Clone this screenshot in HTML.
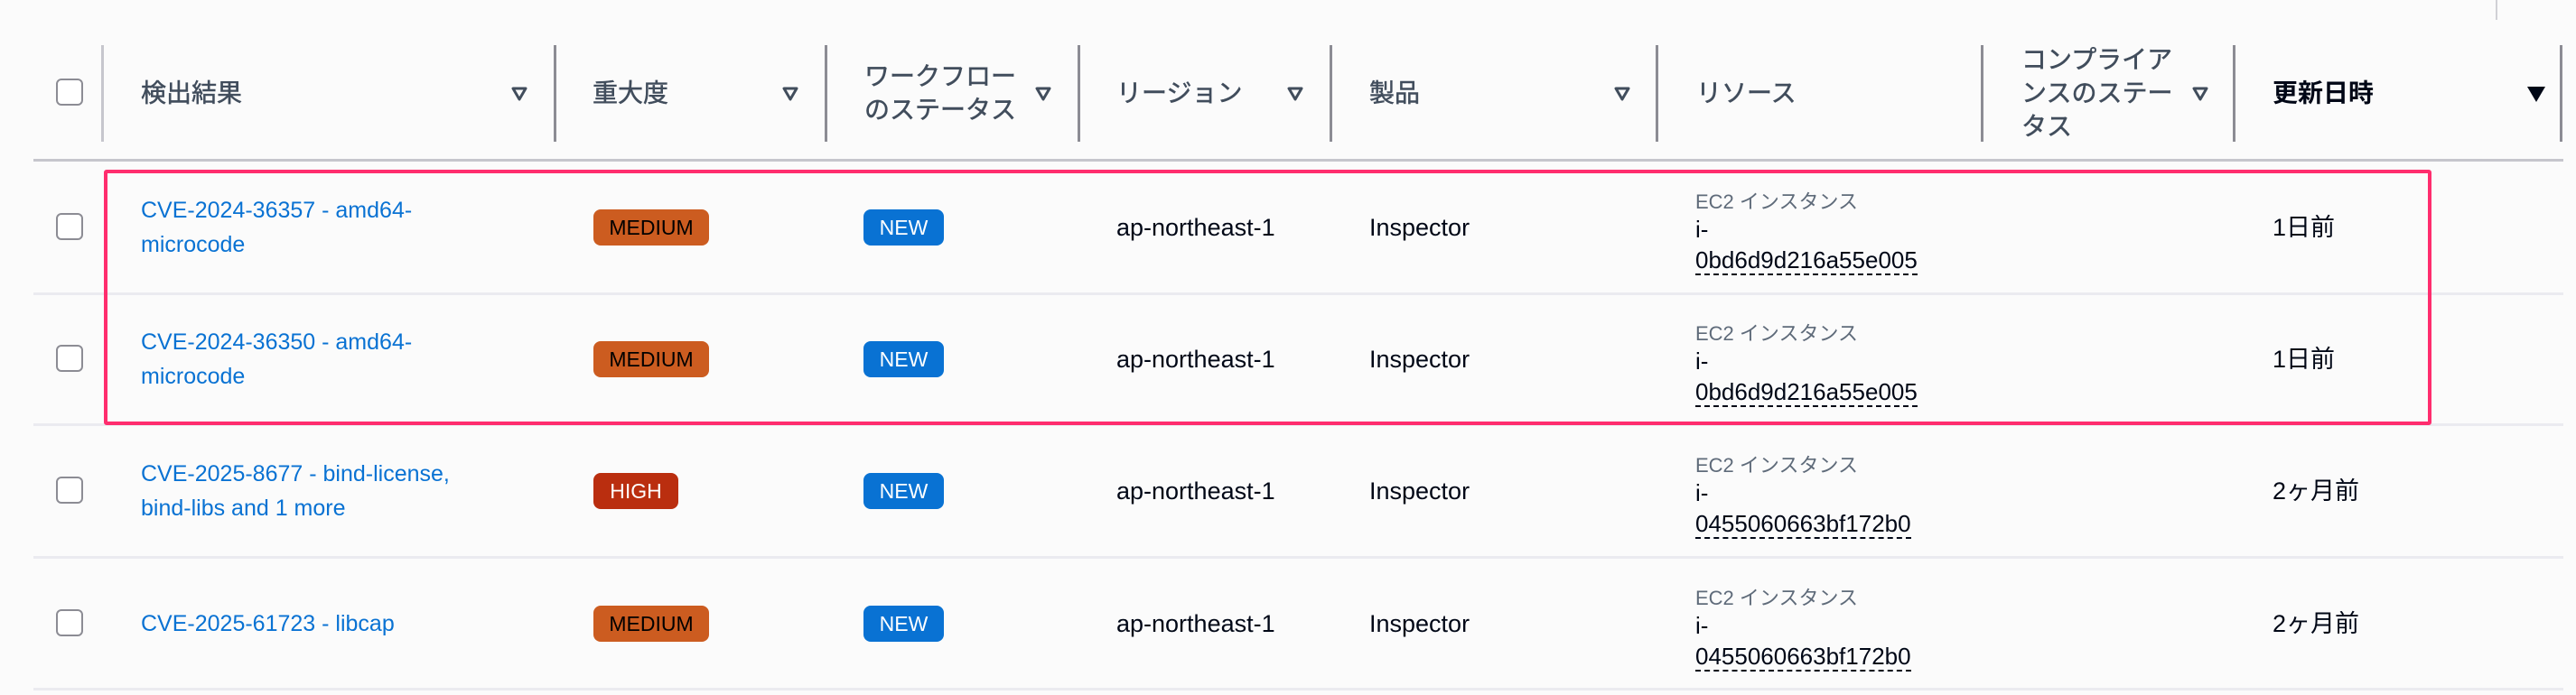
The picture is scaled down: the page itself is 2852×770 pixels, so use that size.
<!DOCTYPE html>
<html><head><meta charset="utf-8"><style>
body{margin:0;width:2852px;height:770px;background:#fbfbfb;position:relative;overflow:hidden;font-family:"Liberation Sans","Noto Sans CJK JP",sans-serif;}
.a{position:absolute;white-space:nowrap;}
.div{position:absolute;top:50px;height:107px;width:3px;background:#8c8c94;}
.h{position:absolute;color:#414d5c;font-size:28px;font-weight:normal;line-height:37px;transform:translateY(-50%);-webkit-text-stroke:0.5px #414d5c;}
.cb{position:absolute;left:62px;width:26px;height:26px;border:2px solid #8c8c94;border-radius:6px;background:#fff;}
.sort{position:absolute;width:18px;height:16px;}
.line{position:absolute;left:37px;right:14px;height:3px;background:#ebebf0;}
.lnk{position:absolute;left:156px;color:#0972d3;font-size:25px;line-height:38px;}
.bd{position:absolute;height:40px;line-height:40px;border-radius:8px;font-size:23px;text-align:center;}
.med{background:#cc5c20;color:#000;width:128px;left:657px;}
.high{background:#ba2e0f;color:#fff;width:94px;left:657px;}
.new{background:#0972d3;color:#fff;width:89px;left:956px;}
.t{position:absolute;color:#000716;font-size:27px;line-height:30px;}
.ec{position:absolute;left:1877px;color:#5f6b7a;font-size:22px;}
.id{position:absolute;left:1877px;color:#000716;font-size:26px;line-height:34px;}
.id span{border-bottom:2px dashed #000716;}
</style></head><body>
<div class="a" style="left:2763px;top:0;width:2px;height:22px;background:#d1d1d6"></div>
<div class="cb" style="top:87px"></div>
<div class="div" style="left:112px;background:#c6c6cd"></div>
<div class="div" style="left:613px"></div>
<div class="div" style="left:913px"></div>
<div class="div" style="left:1193px"></div>
<div class="div" style="left:1472px"></div>
<div class="div" style="left:1833px"></div>
<div class="div" style="left:2193px"></div>
<div class="div" style="left:2472px"></div>
<div class="div" style="left:2834px"></div>
<div class="h" style="left:156px;top:103px">検出結果</div>
<div class="h" style="left:656px;top:103px">重大度</div>
<div class="h" style="left:957px;top:103px">ワークフロー<br>のステータス</div>
<div class="h" style="left:1236px;top:103px">リージョン</div>
<div class="h" style="left:1516px;top:103px">製品</div>
<div class="h" style="left:1878px;top:103px">リソース</div>
<div class="h" style="left:2238px;top:103px">コンプライア<br>ンスのステー<br>タス</div>
<div class="h" style="left:2516px;top:103px;color:#000716;font-weight:bold;-webkit-text-stroke:0">更新日時</div>
<svg class="sort" style="left:566px;top:96px" viewBox="0 0 18 16"><path d="M2 2H16L9 14Z" fill="none" stroke="#414d5c" stroke-width="3" stroke-linejoin="round"/></svg>
<svg class="sort" style="left:866px;top:96px" viewBox="0 0 18 16"><path d="M2 2H16L9 14Z" fill="none" stroke="#414d5c" stroke-width="3" stroke-linejoin="round"/></svg>
<svg class="sort" style="left:1146px;top:96px" viewBox="0 0 18 16"><path d="M2 2H16L9 14Z" fill="none" stroke="#414d5c" stroke-width="3" stroke-linejoin="round"/></svg>
<svg class="sort" style="left:1425px;top:96px" viewBox="0 0 18 16"><path d="M2 2H16L9 14Z" fill="none" stroke="#414d5c" stroke-width="3" stroke-linejoin="round"/></svg>
<svg class="sort" style="left:1787px;top:96px" viewBox="0 0 18 16"><path d="M2 2H16L9 14Z" fill="none" stroke="#414d5c" stroke-width="3" stroke-linejoin="round"/></svg>
<svg class="sort" style="left:2427px;top:96px" viewBox="0 0 18 16"><path d="M2 2H16L9 14Z" fill="none" stroke="#414d5c" stroke-width="3" stroke-linejoin="round"/></svg>
<svg class="sort" style="left:2797px;top:94px;width:22px;height:20px" viewBox="0 0 22 20"><path d="M1 2H21L11 19Z" fill="#000716"/></svg>
<div class="line" style="top:176px;background:#c6c6cd"></div>
<div class="line" style="top:324px"></div>
<div class="line" style="top:469px"></div>
<div class="line" style="top:616px"></div>
<div class="line" style="top:762px"></div>

<div class="cb" style="top:236px"></div>
<div class="lnk" style="top:214px">CVE-2024-36357 - amd64-<br>microcode</div>
<div class="bd med" style="top:232px">MEDIUM</div>
<div class="bd new" style="top:232px">NEW</div>
<div class="t" style="left:1236px;top:237px">ap-northeast-1</div>
<div class="t" style="left:1516px;top:237px">Inspector</div>
<div class="ec" style="top:206px">EC2 インスタンス</div>
<div class="id" style="top:237px">i-<br><span>0bd6d9d216a55e005</span></div>
<div class="t" style="left:2516px;top:237px">1日前</div>

<div class="cb" style="top:382px"></div>
<div class="lnk" style="top:360px">CVE-2024-36350 - amd64-<br>microcode</div>
<div class="bd med" style="top:378px">MEDIUM</div>
<div class="bd new" style="top:378px">NEW</div>
<div class="t" style="left:1236px;top:383px">ap-northeast-1</div>
<div class="t" style="left:1516px;top:383px">Inspector</div>
<div class="ec" style="top:352px">EC2 インスタンス</div>
<div class="id" style="top:383px">i-<br><span>0bd6d9d216a55e005</span></div>
<div class="t" style="left:2516px;top:383px">1日前</div>

<div class="cb" style="top:528px"></div>
<div class="lnk" style="top:506px">CVE-2025-8677 - bind-license,<br>bind-libs and 1 more</div>
<div class="bd high" style="top:524px">HIGH</div>
<div class="bd new" style="top:524px">NEW</div>
<div class="t" style="left:1236px;top:529px">ap-northeast-1</div>
<div class="t" style="left:1516px;top:529px">Inspector</div>
<div class="ec" style="top:498px">EC2 インスタンス</div>
<div class="id" style="top:529px">i-<br><span>0455060663bf172b0</span></div>
<div class="t" style="left:2516px;top:529px">2ヶ月前</div>

<div class="cb" style="top:675px"></div>
<div class="lnk" style="top:672px">CVE-2025-61723 - libcap</div>
<div class="bd med" style="top:671px">MEDIUM</div>
<div class="bd new" style="top:671px">NEW</div>
<div class="t" style="left:1236px;top:676px">ap-northeast-1</div>
<div class="t" style="left:1516px;top:676px">Inspector</div>
<div class="ec" style="top:645px">EC2 インスタンス</div>
<div class="id" style="top:676px">i-<br><span>0455060663bf172b0</span></div>
<div class="t" style="left:2516px;top:676px">2ヶ月前</div>

<div class="a" style="left:115px;top:188px;width:2569px;height:275px;border:4px solid #ff2d6e;border-radius:3px"></div>
</body></html>
